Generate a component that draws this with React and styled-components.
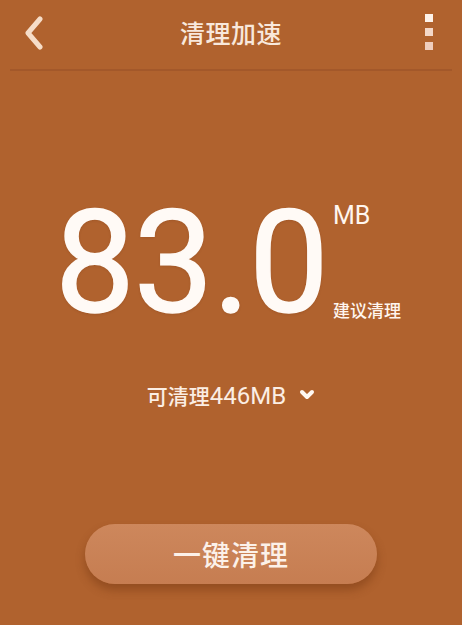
import React from 'react';
import styled, { createGlobalStyle } from 'styled-components';

const GlobalStyle = createGlobalStyle`
  html, body {
    margin: 0;
    padding: 0;
    background: #b0622e;
  }
  body {
    font-family: Roboto, "Noto Sans CJK SC", sans-serif;
  }
`;

const Screen = styled.div`
  width: 462px;
  height: 625px;
  background: #b0622e;
  color: #fbeee4;
  display: flex;
  flex-direction: column;
  overflow: hidden;
`;

const Header = styled.div`
  height: 69px;
  margin: 0 10px;
  border-bottom: 2px solid #a3582a;
  display: grid;
  grid-template-columns: 60px 1fr 60px;
  align-items: center;
`;

const BackButton = styled.button`
  background: none;
  border: none;
  padding: 0 0 4px 13px;
  display: flex;
  align-items: center;
  cursor: pointer;
`;

const Title = styled.div`
  text-align: center;
  font-size: 25px;
  font-weight: 500;
  color: #f8e8dc;
  padding-bottom: 5px;
  letter-spacing: 0.5px;
`;

const MenuDots = styled.div`
  justify-self: end;
  margin-right: 19px;
  margin-bottom: 5px;
  display: flex;
  flex-direction: column;
  gap: 6px;
`;

const Dot = styled.span`
  width: 8px;
  height: 8px;
  background: ${p => p.$c};
`;

const Body = styled.div`
  flex: 1;
  display: flex;
  flex-direction: column;
  align-items: center;
`;

const Reading = styled.div`
  margin-top: 122px;
  margin-right: 6px;
  display: flex;
  align-items: stretch;
`;

const BigNumber = styled.div`
  font-size: 142px;
  line-height: 142px;
  font-weight: 400;
  color: #fffaf6;
  -webkit-text-stroke: 1.5px #fffaf6;
  letter-spacing: -1px;
  text-shadow: 0 1px 3px rgba(90, 40, 10, 0.25);
`;

const Side = styled.div`
  display: flex;
  flex-direction: column;
  justify-content: space-between;
  padding: 8px 0 13px 5px;
`;

const Unit = styled.div`
  font-size: 25px;
  color: #fff6ef;
`;

const Hint = styled.div`
  font-size: 17px;
  font-weight: 500;
  color: #fff6ef;
`;

const Freeable = styled.div`
  margin-top: 45px;
  display: flex;
  align-items: center;
  gap: 13px;
  font-size: 21px;
  font-weight: 500;
  color: #fbeee4;
`;

const Amount = styled.span`
  font-size: 24px;
  font-weight: 400;
`;

const CleanButton = styled.button`
  margin-top: 114px;
  width: 292px;
  height: 60px;
  border-radius: 30px;
  border: none;
  background: linear-gradient(#cd875c, #c67d51);
  box-shadow: 0 6px 10px rgba(110, 50, 15, 0.45);
  color: #fcf1e9;
  font-family: inherit;
  font-size: 28px;
  font-weight: 500;
  letter-spacing: 1px;
  cursor: pointer;
`;

const App = () => (
    <>
        <GlobalStyle />
        <Screen>
            <Header>
                <BackButton>
                    <svg width="22" height="34" viewBox="0 0 22 34">
                        <path d="M17 3 L5 17 L17 31" fill="none" stroke="#f6ddc8" strokeWidth="5" strokeLinecap="round" strokeLinejoin="round" />
                    </svg>
                </BackButton>
                <Title>清理加速</Title>
                <MenuDots>
                    <Dot $c="#fdf2ea" />
                    <Dot $c="#f4d8c8" />
                    <Dot $c="#efcdbd" />
                </MenuDots>
            </Header>
            <Body>
                <Reading>
                    <BigNumber>83.0</BigNumber>
                    <Side>
                        <Unit>MB</Unit>
                        <Hint>建议清理</Hint>
                    </Side>
                </Reading>
                <Freeable>
                    <span>可清理<Amount>446MB</Amount></span>
                    <svg width="16" height="12" viewBox="0 0 16 12">
                        <path d="M3 3 L8 8 L13 3" fill="none" stroke="#fff8f2" strokeWidth="4" strokeLinecap="round" strokeLinejoin="round" />
                    </svg>
                </Freeable>
                <CleanButton>一键清理</CleanButton>
            </Body>
        </Screen>
    </>
);

export default App;
